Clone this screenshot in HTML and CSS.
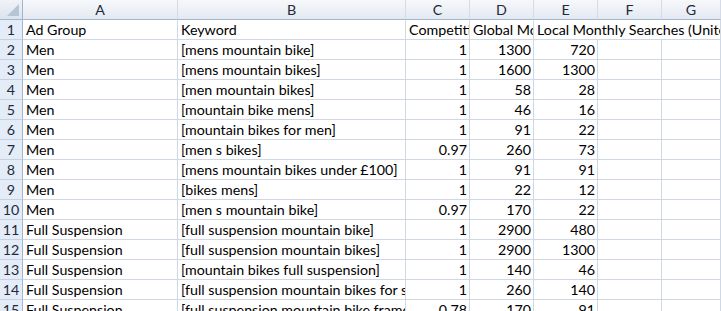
FILE: index.html
```html
<!DOCTYPE html>
<html>
<head>
<meta charset="utf-8">
<link rel="stylesheet" href="styles.css">
</head>
<body>
<div class="sheet">
  <div class="corner"><span class="tri"></span></div>
  <div class="ch">A</div><div class="ch">B</div><div class="ch">C</div><div class="ch">D</div><div class="ch">E</div><div class="ch">F</div><div class="ch">G</div>

  <div class="rh">1</div><div class="c">Ad Group</div><div class="c">Keyword</div><div class="c">Competition</div><div class="c">Global Monthly Searches</div><div class="c span3">Local Monthly Searches (United Kingdom)</div>

  <div class="rh">2</div><div class="c">Men</div><div class="c">[mens mountain bike]</div><div class="c n">1</div><div class="c n">1300</div><div class="c n">720</div><div class="c"></div><div class="c"></div>
  <div class="rh">3</div><div class="c">Men</div><div class="c">[mens mountain bikes]</div><div class="c n">1</div><div class="c n">1600</div><div class="c n">1300</div><div class="c"></div><div class="c"></div>
  <div class="rh">4</div><div class="c">Men</div><div class="c">[men mountain bikes]</div><div class="c n">1</div><div class="c n">58</div><div class="c n">28</div><div class="c"></div><div class="c"></div>
  <div class="rh">5</div><div class="c">Men</div><div class="c">[mountain bike mens]</div><div class="c n">1</div><div class="c n">46</div><div class="c n">16</div><div class="c"></div><div class="c"></div>
  <div class="rh">6</div><div class="c">Men</div><div class="c">[mountain bikes for men]</div><div class="c n">1</div><div class="c n">91</div><div class="c n">22</div><div class="c"></div><div class="c"></div>
  <div class="rh">7</div><div class="c">Men</div><div class="c">[men s bikes]</div><div class="c n">0.97</div><div class="c n">260</div><div class="c n">73</div><div class="c"></div><div class="c"></div>
  <div class="rh">8</div><div class="c">Men</div><div class="c">[mens mountain bikes under £100]</div><div class="c n">1</div><div class="c n">91</div><div class="c n">91</div><div class="c"></div><div class="c"></div>
  <div class="rh">9</div><div class="c">Men</div><div class="c">[bikes mens]</div><div class="c n">1</div><div class="c n">22</div><div class="c n">12</div><div class="c"></div><div class="c"></div>
  <div class="rh">10</div><div class="c">Men</div><div class="c">[men s mountain bike]</div><div class="c n">0.97</div><div class="c n">170</div><div class="c n">22</div><div class="c"></div><div class="c"></div>
  <div class="rh">11</div><div class="c">Full Suspension</div><div class="c">[full suspension mountain bike]</div><div class="c n">1</div><div class="c n">2900</div><div class="c n">480</div><div class="c"></div><div class="c"></div>
  <div class="rh">12</div><div class="c">Full Suspension</div><div class="c">[full suspension mountain bikes]</div><div class="c n">1</div><div class="c n">2900</div><div class="c n">1300</div><div class="c"></div><div class="c"></div>
  <div class="rh">13</div><div class="c">Full Suspension</div><div class="c">[mountain bikes full suspension]</div><div class="c n">1</div><div class="c n">140</div><div class="c n">46</div><div class="c"></div><div class="c"></div>
  <div class="rh">14</div><div class="c">Full Suspension</div><div class="c">[full suspension mountain bikes for sale]</div><div class="c n">1</div><div class="c n">260</div><div class="c n">140</div><div class="c"></div><div class="c"></div>
  <div class="rh">15</div><div class="c">Full Suspension</div><div class="c">[full suspension mountain bike frames]</div><div class="c n">0.78</div><div class="c n">170</div><div class="c n">91</div><div class="c"></div><div class="c"></div>
</div>
</body>
</html>
```

FILE: styles.css
```css
html, body {
  margin: 0;
  padding: 0;
  background: #ffffff;
  overflow: hidden;
}

.sheet {
  display: grid;
  grid-template-columns: 23px 155px 228px 64px 64px 64px 64px minmax(0, 1fr);
  grid-auto-rows: 20px;
  font-family: Lato, "Open Sans", sans-serif;
  font-size: 14.25px;
  color: #000;
  width: 721px;
  height: 311px;
  overflow: hidden;
}

.corner {
  position: relative;
  background: linear-gradient(#f0f3f8, #dce3ed);
  border-right: 1px solid #9eb6ce;
  border-bottom: 1px solid #9eb6ce;
}

.tri {
  position: absolute;
  right: 3px;
  bottom: 3px;
  width: 0;
  height: 0;
  border-left: 12px solid transparent;
  border-bottom: 12px solid #b6c4d8;
}

.ch {
  background: linear-gradient(#f6f8fb, #e4e9f1);
  border-right: 1px solid #d5dce7;
  border-bottom: 1px solid #9eb6ce;
  text-align: center;
  line-height: 19px;
  color: #1f2a3a;
}

.rh {
  background: #e4ecf7;
  border-right: 1px solid #9eb6ce;
  border-bottom: 1px solid #c5d1e2;
  text-align: center;
  line-height: 19px;
  color: #1f2a3a;
}

.c {
  border-right: 1px solid #d0d7e5;
  border-bottom: 1px solid #d0d7e5;
  padding: 0 2px 0 3px;
  line-height: 20px;
  white-space: nowrap;
  overflow: hidden;
}

.n {
  text-align: right;
}

.span3 {
  grid-column: span 3;
}
```
